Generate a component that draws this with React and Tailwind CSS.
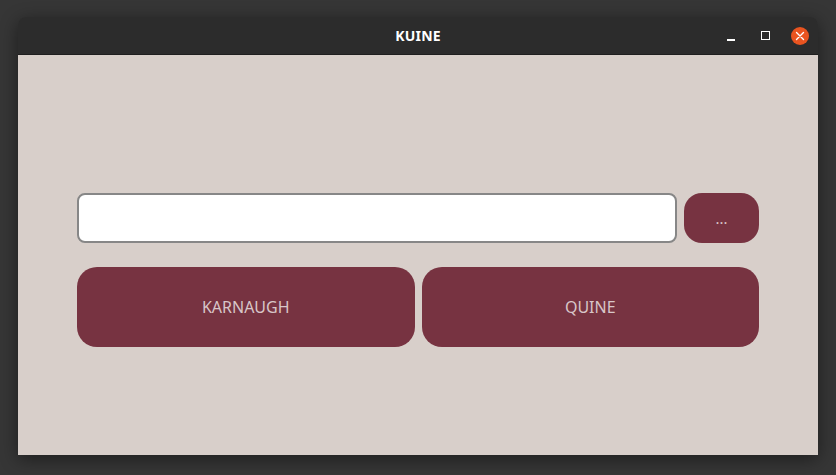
export default function App() {
  return (
    <div
      className="w-[836px] h-[475px] bg-[#363636] pt-[17px] pl-[18px] overflow-hidden"
      style={{ fontFamily: "'Noto Sans', 'Open Sans', sans-serif" }}
    >
      <div className="w-[800px] h-[438px] flex flex-col rounded-t-[8px] overflow-hidden shadow-[0_4px_18px_rgba(0,0,0,0.45)]">
        {/* title bar */}
        <div className="relative h-[38px] bg-[#2c2c2c] border-b border-[#1f1f1f] flex items-center justify-center">
          <span className="text-white font-bold text-[14px] tracking-[0.2px]">KUINE</span>
          <div className="absolute right-[9px] top-0 h-full flex items-center gap-[18px]">
            <div className="w-[16px] h-[16px] flex items-end justify-center pb-[3px]">
              <div className="w-[8px] h-[1.5px] bg-white" />
            </div>
            <div className="w-[16px] h-[16px] flex items-center justify-center">
              <div className="w-[9px] h-[9px] border-[1.5px] border-white" />
            </div>
            <div className="w-[18px] h-[18px] rounded-full bg-[#e95420] flex items-center justify-center">
              <svg width="10" height="10" viewBox="0 0 10 10">
                <path d="M1.5 1.5 L8.5 8.5 M8.5 1.5 L1.5 8.5" stroke="white" strokeWidth="1.4" strokeLinecap="round" />
              </svg>
            </div>
          </div>
        </div>
        {/* content */}
        <div className="flex-1 bg-[#d8cfca] px-[59px] pt-[138px]">
          <div className="flex gap-[7px] h-[50px]">
            <input
              type="text"
              className="flex-1 h-full bg-white border-2 border-[#878787] rounded-[8px] outline-none px-3"
            />
            <button className="w-[75px] h-full bg-[#773341] rounded-[18px] text-[#d8c6c8] text-[15px]">
              ...
            </button>
          </div>
          <div className="flex gap-[7px] h-[80px] mt-[24px]">
            <button className="flex-1 bg-[#773341] rounded-[20px] text-[#d8c6c8] text-[16px]">
              KARNAUGH
            </button>
            <button className="flex-1 bg-[#773341] rounded-[20px] text-[#d8c6c8] text-[16px]">
              QUINE
            </button>
          </div>
        </div>
      </div>
    </div>
  );
}
